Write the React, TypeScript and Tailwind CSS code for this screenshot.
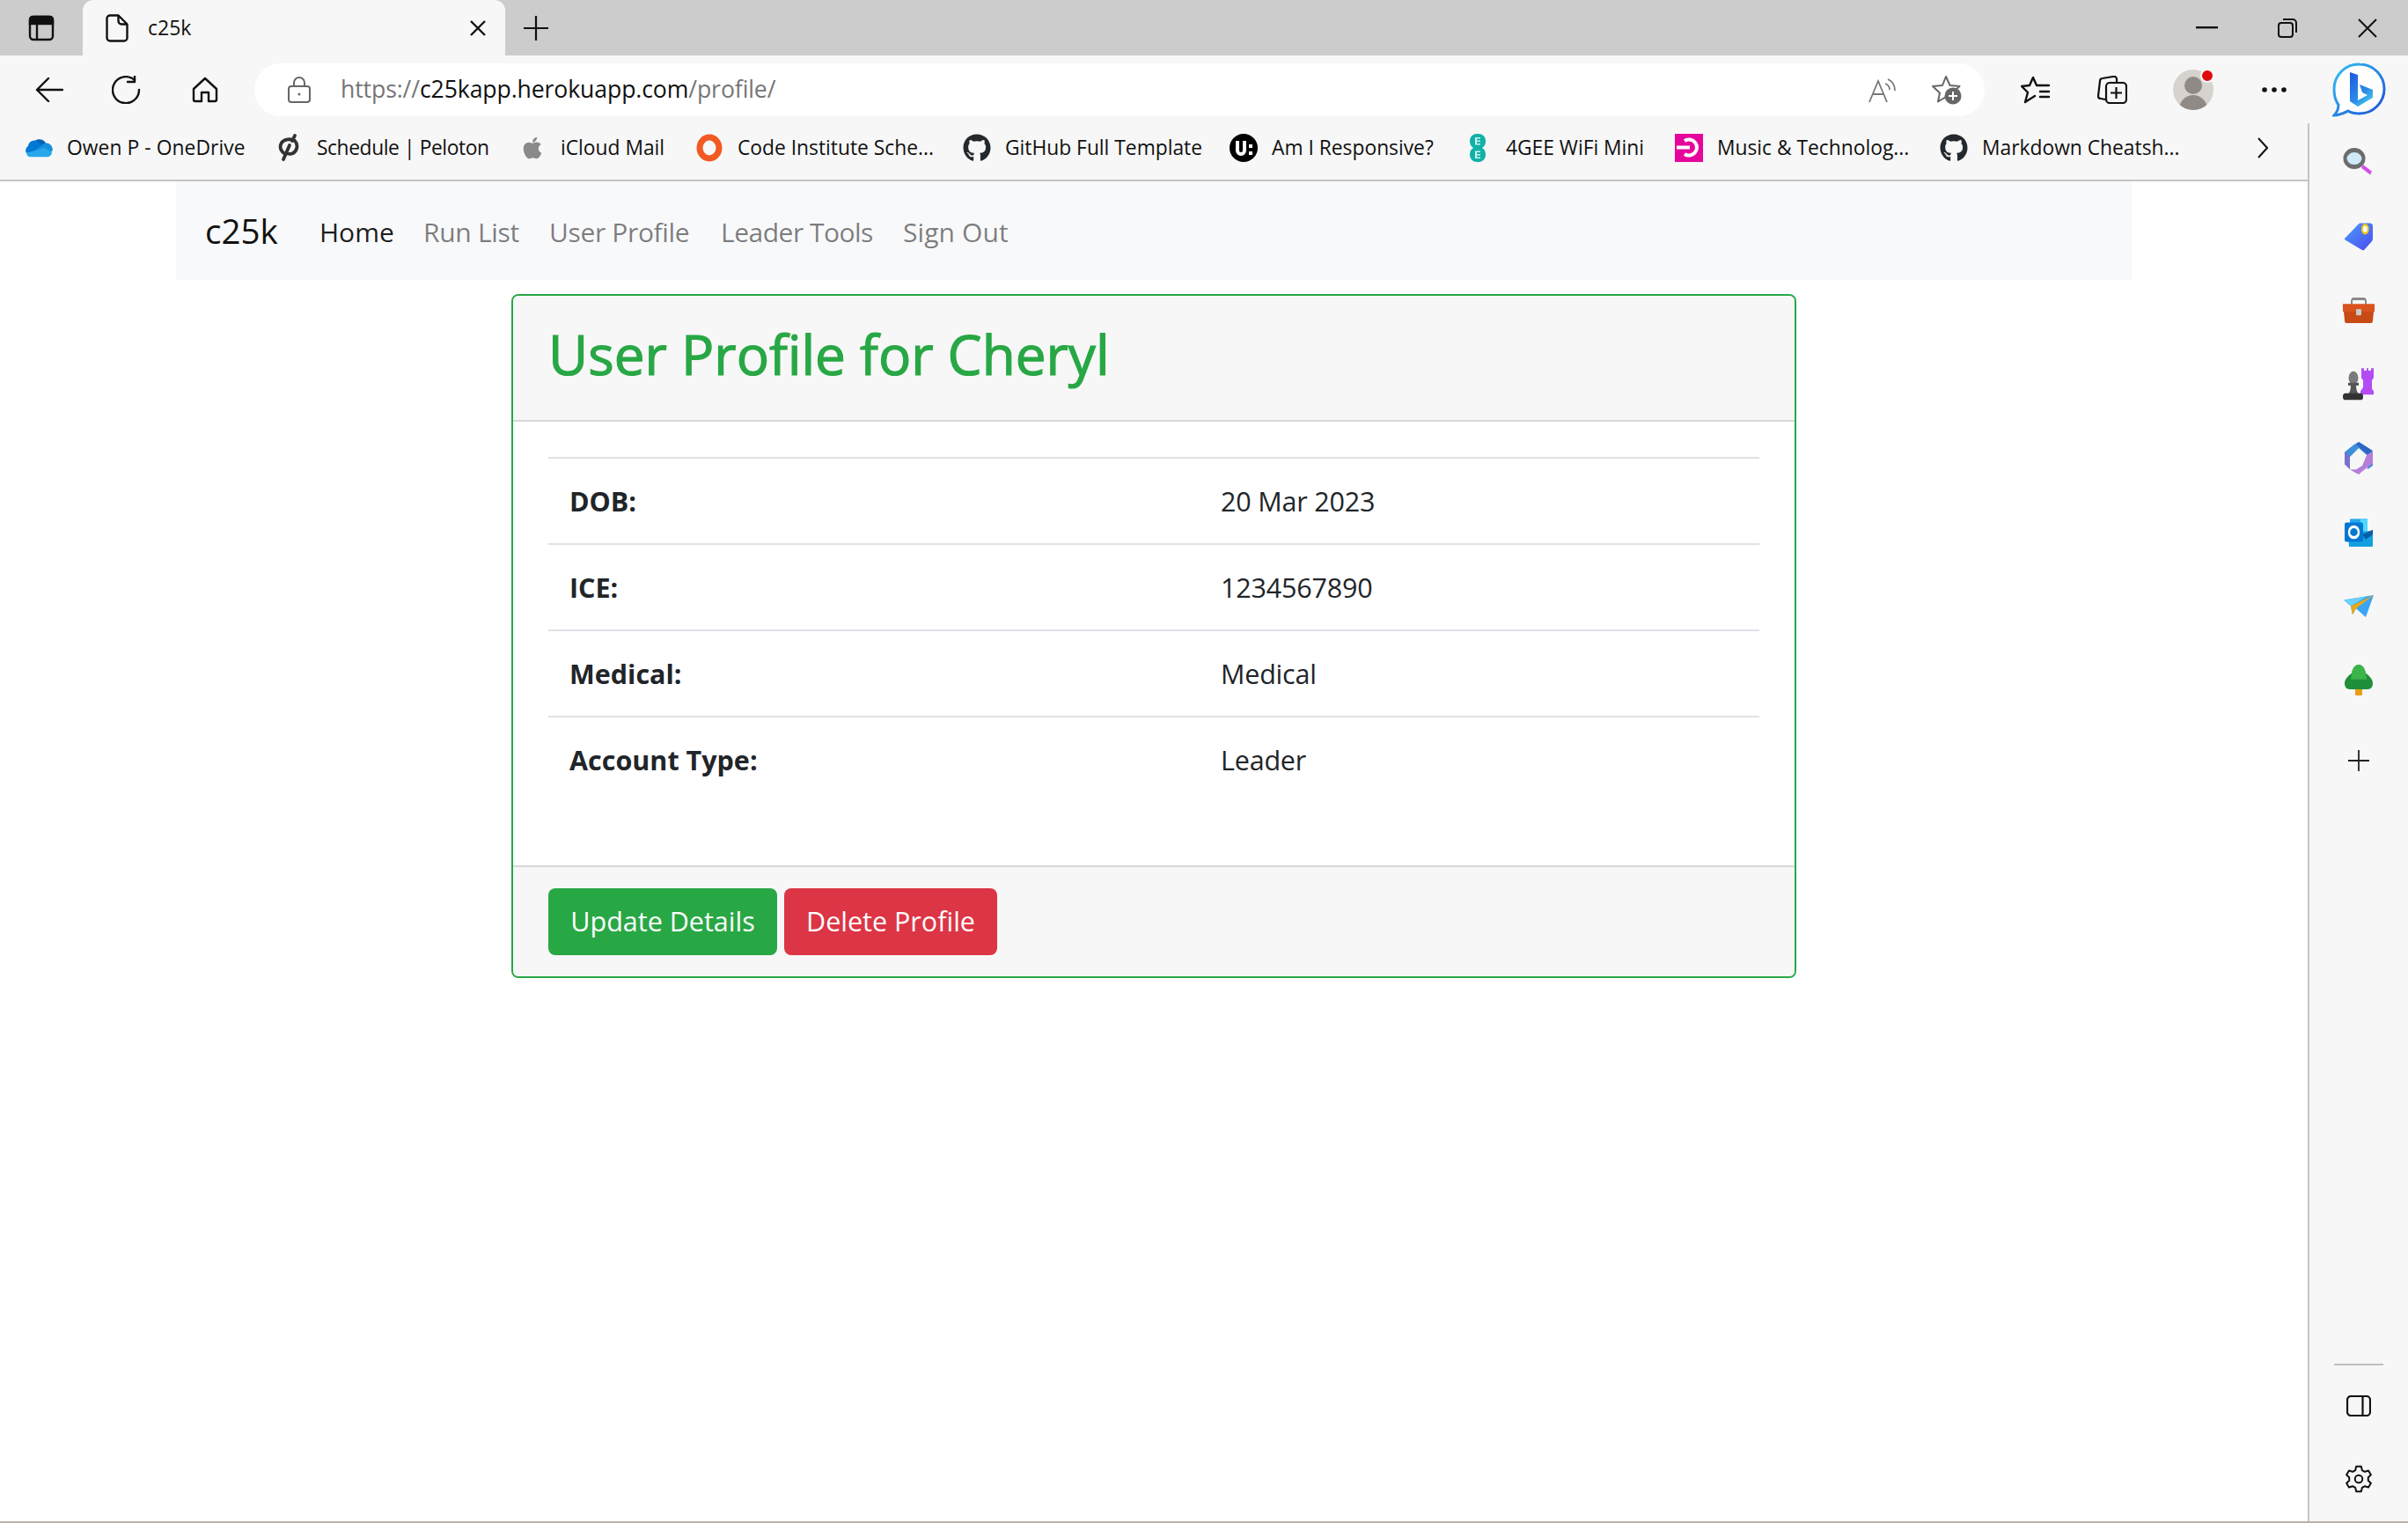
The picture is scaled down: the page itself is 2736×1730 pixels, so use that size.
import React from "react";
import { FaApple, FaGithub } from "react-icons/fa";

const ui = "font-['Open_Sans','Noto_Sans',sans-serif]";

function Doc() {
  return (
    <svg width="26" height="32" viewBox="0 0 26 32" fill="none" stroke="#111" strokeWidth="2.4" strokeLinejoin="round">
      <path d="M5 1.500h9.500L24.500 11.500V27a3.500 3.500 0 0 1-3.500 3.500H5A3.500 3.500 0 0 1 1.500 27V5A3.500 3.500 0 0 1 5 1.500z" />
      <path d="M14.500 1.500V8a3.500 3.500 0 0 0 3.500 3.500h6.500" />
    </svg>
  );
}

function OneDrive() {
  return (
    <svg width="34" height="24" viewBox="0 0 34 24">
      <path d="M13 3a9 9 0 0 1 13 4 7 7 0 0 1 7 9L15 14z" fill="#0364b8" />
      <path d="M4 10a8 8 0 0 1 9-7l9 6-8 8-12 1a6 6 0 0 1 2-8z" fill="#0078d4" />
      <path d="M22 8a7 7 0 0 1 11 8l-8 4-12-6z" fill="#1490df" />
      <path d="M2 18l22-6 9 5a6 6 0 0 1-6 6H7a6 6 0 0 1-5-5z" fill="#28a8ea" />
    </svg>
  );
}

function Peloton() {
  return (
    <svg width="24" height="32" viewBox="0 0 24 32" fill="none" stroke="#333" strokeWidth="3.800" strokeLinecap="round">
      <path d="M19 2l-3 6" />
      <path d="M13 13L6 29" />
      <path d="M9 23C3 21 1 15 4 10c3-4 10-5 15-2 4 4 3 11-2 14-2 1-4 1-6 .5" />
    </svg>
  );
}

function CodeInst() {
  return (
    <svg width="30" height="32" viewBox="0 0 30 32" fill="none">
      <ellipse cx="15" cy="16" rx="11" ry="12" stroke="#f15a22" strokeWidth="7" />
    </svg>
  );
}

function UIcon() {
  return (
    <svg width="32" height="32" viewBox="0 0 32 32">
      <circle cx="16" cy="16" r="16" fill="#000" />
      <path d="M7 8v11a6 6 0 0 0 12 0V8h-4v11a2 2 0 0 1-4 0V8z" fill="#fff" />
      <rect x="22" y="12" width="4" height="4" fill="#fff" />
      <rect x="22" y="20" width="4" height="4" fill="#fff" />
    </svg>
  );
}

function EE() {
  return (
    <svg width="18" height="32" viewBox="0 0 18 32">
      <rect x="0" y="0" width="18" height="17" rx="8" fill="#11b1a8" />
      <rect x="0" y="15" width="18" height="17" rx="8" fill="#11b1a8" />
      <path d="M6 4h6v1.500H8V7.500h4V9H8v2h4v1.500H6zM6 19.500h6V21H8v2h4v1.500H8v2h4V28H6z" fill="#c8f4f0" />
    </svg>
  );
}

function Pink() {
  return (
    <svg width="32" height="32" viewBox="0 0 32 32" fill="none">
      <rect width="32" height="32" fill="#e6069b" />
      <path d="M11 8a9 9 0 1 1 0 15" stroke="#fff" strokeWidth="4" />
      <rect x="2" y="13.500" width="15" height="4" fill="#fff" />
    </svg>
  );
}

function Bookmark({ icon, label, textClass, after }: { icon: React.ReactNode; label: string; textClass: string; after: string }) {
  return (
    <div className={`flex items-center shrink-0 ${after}`}>
      <div className="flex w-[32px] h-[32px] items-center justify-center shrink-0">{icon}</div>
      <span className={`ml-[16px] text-[22.800px] text-[#111] whitespace-nowrap ${textClass}`}>{label}</span>
    </div>
  );
}

function Bing() {
  return (
    <svg width="62" height="62" viewBox="0 0 62 62" fill="none">
      <defs>
        <linearGradient id="bgo" x1="0" y1="0" x2="1" y2="1">
          <stop offset="0" stopColor="#35c1f1" />
          <stop offset="1" stopColor="#1b4fd8" />
        </linearGradient>
        <linearGradient id="bgb" x1="0.2" y1="0" x2="0.8" y2="1">
          <stop offset="0" stopColor="#1e5fe0" />
          <stop offset="0.6" stopColor="#2a8ae8" />
          <stop offset="1" stopColor="#45d0ea" />
        </linearGradient>
      </defs>
      <path
        d="M31 2a28 28 0 0 1 0 56c-6 0-10-1-13-3-4 2-9 5-16 5 3-3 5-8 5-12-3-4-5-10-5-18a28 28 0 0 1 29-28z"
        fill="#fff"
        stroke="url(#bgo)"
        strokeWidth="3"
      />
      <path d="M20 11l9 3v29l11-6-6-3-3-9 15 6v9L29 50l-9-6z" fill="url(#bgb)" />
    </svg>
  );
}

function Gear() {
  return (
    <svg width="34" height="34" viewBox="0 0 24 24" fill="none" stroke="#111" strokeWidth="1.400" strokeLinejoin="round">
      <path d="M10 2h4l.7 3 2.200 1.200 2.900-.9 2 3.400-2.200 2.100v2.400l2.200 2.100-2 3.400-2.900-.9L14.700 19l-.7 3h-4l-.7-3-2.200-1.200-2.900.9-2-3.400 2.200-2.100v-2.400L2.200 8.700l2-3.400 2.900.9L9.300 5z" />
      <circle cx="12" cy="12" r="3" />
    </svg>
  );
}

const sideIcons: React.ReactNode[] = [
  <svg key="s" width="36" height="33" viewBox="0 0 36 26" preserveAspectRatio="none">
    <ellipse cx="13" cy="9.500" rx="10.500" ry="7.500" fill="#cfe9f8" stroke="#6c6c6c" strokeWidth="4" />
    <path d="M23 15l10 6-2 3-10-6z" fill="#d14fe8" />
  </svg>,
  <svg key="t" width="33" height="33" viewBox="0 0 34 24" preserveAspectRatio="none">
    <defs>
      <linearGradient id="tg" x1="0" y1="0" x2="1" y2="1">
        <stop offset="0" stopColor="#4b9cf5" />
        <stop offset="1" stopColor="#4c4cf5" />
      </linearGradient>
    </defs>
    <path d="M1 13L16 2a4 4 0 0 1 2-1h12a3 3 0 0 1 3 3v10a3 3 0 0 1-1 2l-9 7a3 3 0 0 1-3 0L1 15a1 1 0 0 1 0-2z" fill="url(#tg)" />
    <circle cx="24" cy="6" r="3.500" fill="#fff" stroke="#f5c518" strokeWidth="2" />
  </svg>,
  <svg key="b" width="36" height="29" viewBox="0 0 36 20" preserveAspectRatio="none">
    <path d="M10 6V3a2 2 0 0 1 2-2h12a2 2 0 0 1 2 2v3" fill="none" stroke="#8a8a8a" strokeWidth="2" />
    <path d="M0 5h36v6H0z" fill="#d9541e" />
    <path d="M1 11h34l-1 7a2 2 0 0 1-2 2H4a2 2 0 0 1-2-2z" fill="#c84a14" />
    <rect x="15" y="9" width="6" height="5" rx="1" fill="#c9c9c9" />
  </svg>,
  <svg key="c" width="36" height="38" viewBox="0 0 36 28" preserveAspectRatio="none">
    <path d="M21 1h3v2h3V1h2v2h3V1h3v8l-2 2v7l2 2v3H20v-3l3-3v-6l-2-2z" fill="#b44cf5" />
    <circle cx="12" cy="9" r="5.500" fill="#7a7a7a" />
    <path d="M6 13h12v2.500h-3c0 3 1 6 4 8H5c3-2 4-5 4-8H6z" fill="#555" />
    <rect x="0" y="22" width="23" height="5.500" rx="2.700" fill="#333" />
  </svg>,
  <svg key="m" width="32" height="37" viewBox="0 0 32 26" preserveAspectRatio="none">
    <path d="M0 8l11-6 5-2 11 5 5 3v11l-6 3v-11L16 5 6 12v7l-6-3z" fill="#3f8fd8" />
    <path d="M26 9l6-1v9l-13 7-3 2-5-2-5-2 7 0 7-3z" fill="#b57ed8" />
    <path d="M0 8l6 4v10L0 18z" fill="#7a70d0" />
    <path d="M16 0l16 7-6 3L13 2z" fill="#2f67c4" />
  </svg>,
  <svg key="o" width="32" height="33" viewBox="0 0 32 24" preserveAspectRatio="none">
    <path d="M6 1h20v10H6z" fill="#28a8ea" />
    <path d="M18 1h8v10h-8z" fill="#50d9ff" />
    <path d="M4 11h28v12a1 1 0 0 1-1 1H5z" fill="#14a0e0" />
    <path d="M20 14l12-4v4l-8 4z" fill="#0a5ea8" />
    <rect x="0" y="4" width="21" height="16" rx="2" fill="#0078d4" />
    <ellipse cx="10.500" cy="12" rx="5.500" ry="4.500" fill="none" stroke="#fff" strokeWidth="2.400" />
  </svg>,
  <svg key="p" width="34" height="25" viewBox="0 0 34 18" preserveAspectRatio="none">
    <path d="M0 4l34-4-9 18-11-7-4 5-2-7z" fill="#3aa4f5" />
    <path d="M8 9l26-9-20 11-4 5z" fill="#eaa81a" />
    <path d="M0 4l26-3L8 9z" fill="#6dd0fa" />
  </svg>,
  <svg key="tr" width="32" height="35" viewBox="0 0 32 25" preserveAspectRatio="none">
    <rect x="12" y="18" width="8" height="7" rx="1" fill="#e8a010" />
    <path d="M16 0c4 0 7 3 8 7 4 2 8 5 8 8 0 3-2 5-6 5H6c-4 0-6-2-6-5 0-3 4-6 8-8 1-4 4-7 8-7z" fill="#1f8f3a" />
    <path d="M16 0c4 0 7 3 8 7l1 5H7l1-5c1-4 4-7 8-7z" fill="#3cb44a" />
  </svg>,
];

const rows: [string, string][] = [
  ["DOB:", "20 Mar 2023"],
  ["ICE:", "1234567890"],
  ["Medical:", "Medical"],
  ["Account Type:", "Leader"],
];

export default function App() {
  return (
    <div className={`${ui} w-[2736px] h-[1730px] flex flex-col overflow-hidden bg-white text-[#212529]`}>
      {/* tab strip */}
      <div className="h-[63px] shrink-0 bg-[#cccccc] flex items-stretch">
        <div className="w-[94px] flex items-center justify-center">
          <svg width="30" height="30" viewBox="0 0 30 30" fill="none" stroke="#111" strokeWidth="2.400">
            <rect x="2" y="2" width="26" height="26" rx="4" />
            <path d="M2 5a3 3 0 0 1 3-3h20a3 3 0 0 1 3 3v5H2z" fill="#111" />
            <path d="M10 10v18" />
          </svg>
        </div>
        <div className="w-[480px] bg-[#f7f7f7] rounded-t-[12px] flex items-center pl-[26px] pr-[22px]">
          <Doc />
          <span className="ml-[22px] text-[23px] text-[#111]">c25k</span>
          <svg className="ml-auto" width="18" height="18" viewBox="0 0 18 18" stroke="#111" strokeWidth="2.400">
            <path d="M1 1l16 16M17 1L1 17" />
          </svg>
        </div>
        <div className="ml-[21px] flex items-center">
          <svg width="28" height="28" viewBox="0 0 28 28" stroke="#111" strokeWidth="2.200">
            <path d="M0 14h28M14 0v28" />
          </svg>
        </div>
        <div className="ml-auto flex items-center pr-[35px]">
          <svg width="25" height="3" viewBox="0 0 25 3" fill="#111">
            <rect width="25" height="2.400" />
          </svg>
          <svg className="ml-[68px]" width="22" height="22" viewBox="0 0 22 22" fill="none" stroke="#111" strokeWidth="2">
            <rect x="1" y="5" width="16" height="16" rx="3" />
            <path d="M6 1h11a4 4 0 0 1 4 4v11" />
          </svg>
          <svg className="ml-[69px]" width="22" height="22" viewBox="0 0 22 22" stroke="#111" strokeWidth="2">
            <path d="M1 1l20 20M21 1L1 21" />
          </svg>
        </div>
      </div>

      {/* toolbar */}
      <div className="h-[77px] shrink-0 bg-[#f7f7f7] pt-[9px]">
        <div className="h-[60px] flex items-center">
          <div className="flex items-center pl-[40px] w-[289px]">
            <svg width="32" height="30" viewBox="0 0 32 30" fill="none" stroke="#111" strokeWidth="2.400" strokeLinecap="round" strokeLinejoin="round">
              <path d="M31 15H2M15 2L2 15l13 13" />
            </svg>
            <svg className="ml-[55px]" width="34" height="32" viewBox="0 0 34 32" fill="none" stroke="#111" strokeWidth="2.400" strokeLinecap="round" strokeLinejoin="round">
              <path d="M26 5a15 15 0 1 0 5 11" />
              <path d="M26 0v7h-8" />
            </svg>
            <svg className="ml-[57px]" width="30" height="30" viewBox="0 0 30 30" fill="none" stroke="#111" strokeWidth="2.400" strokeLinejoin="round">
              <path d="M15 2L2 14v12a2 2 0 0 0 2 2h7V18h8v10h7a2 2 0 0 0 2-2V14z" />
            </svg>
          </div>
          <div className="w-[1966px] h-[60px] bg-white rounded-[30px] flex items-center pl-[38px] pr-[24px]">
            <svg width="26" height="30" viewBox="0 0 26 30" fill="none" stroke="#666" strokeWidth="2">
              <rect x="1" y="11" width="24" height="18" rx="3" />
              <path d="M7 11V7a6 6 0 0 1 12 0v4" />
              <circle cx="13" cy="20" r="1.500" fill="#666" stroke="none" />
            </svg>
            <span className="ml-[34px] text-[26.600px] tracking-[-0.1px] text-[#767676] whitespace-nowrap">
              https://<span className="text-[#111]">c25kapp.herokuapp.com</span>/profile/
            </span>
            <svg className="ml-auto" width="32" height="30" viewBox="0 0 32 30" fill="none" stroke="#777" strokeWidth="1.800">
              <path d="M1 29L11 5l10 24M5 20h12" />
              <path d="M19 8c3 1 5 3 5 7M22 3c5 2 8 6 8 13" />
            </svg>
            <svg className="ml-[38px]" width="38" height="34" viewBox="0 0 38 34" fill="none">
              <path d="M18 2l4.500 10 11 1-8 7.500 2 10-9.500-5.500L9 30.500l2-10-8-7.500 11-1z" stroke="#666" strokeWidth="2" strokeLinejoin="round" />
              <circle cx="26" cy="24" r="9.500" fill="#666" />
              <path d="M26 19v10M21 24h10" stroke="#fff" strokeWidth="2" />
            </svg>
          </div>
          <svg className="ml-[41px]" width="34" height="32" viewBox="0 0 34 32" fill="none" stroke="#111" strokeWidth="2.400" strokeLinejoin="round" strokeLinecap="round">
            <path d="M22 11h-4L14 2l-4 9-9 1 7 7-3 11 11-7" />
            <path d="M22 11h10M22 18h10M22 24h10" />
          </svg>
          <svg className="ml-[53px]" width="34" height="32" viewBox="0 0 34 32" fill="none" stroke="#111" strokeWidth="2.200" strokeLinejoin="round">
            <path d="M9 27l-5-1a3 3 0 0 1-3-3L3 6a3 3 0 0 1 3-3l12-2a3 3 0 0 1 4 3v3" />
            <rect x="10" y="8" width="23" height="23" rx="4" />
            <path d="M21.500 13v13M15 19.500h13" />
          </svg>
          <div className="relative ml-[52px] w-[46px] h-[46px] shrink-0">
            <div className="absolute inset-0 rounded-full bg-[#d6d3cf] overflow-hidden">
              <div className="absolute left-[13px] top-[8px] w-[20px] h-[20px] rounded-full bg-[#8f8a85]" />
              <div className="absolute left-[7px] top-[29px] w-[32px] h-[32px] rounded-full bg-[#8f8a85]" />
            </div>
            <div className="absolute left-[31px] top-[-1px] w-[16px] h-[16px] rounded-full bg-[#e00b0b] border-2 border-[#f7f7f7]" />
          </div>
          <svg className="ml-[55px]" width="28" height="6" viewBox="0 0 28 6" fill="#111">
            <circle cx="3" cy="3" r="2.800" />
            <circle cx="14" cy="3" r="2.800" />
            <circle cx="25" cy="3" r="2.800" />
          </svg>
          <div className="ml-[52px]">
            <Bing />
          </div>
        </div>
      </div>

      {/* below toolbar */}
      <div className="flex-1 flex min-h-0 border-b-2 border-[#b9b2a9]">
        <div className="w-[2622px] shrink-0 flex flex-col">
          <div className="h-[66px] shrink-0 bg-[#f7f7f7] border-b-2 border-[#c4c4c4] flex items-center pl-[28px] pb-[8px]">
            <Bookmark icon={<OneDrive />} label="Owen P - OneDrive" textClass="w-[202px] tracking-[0.08px]" after="mr-[34px]" />
            <Bookmark icon={<Peloton />} label="Schedule | Peloton" textClass="w-[195px] tracking-[-0.4px]" after="mr-[34px]" />
            <Bookmark icon={<FaApple size={28} color="#8a8a8a" />} label="iCloud Mail" textClass="w-[118px]" after="mr-[35px]" />
            <Bookmark icon={<CodeInst />} label="Code Institute Sche..." textClass="w-[223px]" after="mr-[33px]" />
            <Bookmark icon={<FaGithub size={32} color="#24292e" />} label="GitHub Full Template" textClass="w-[221px]" after="mr-[34px]" />
            <Bookmark icon={<UIcon />} label="Am I Responsive?" textClass="w-[183px]" after="mr-[35px]" />
            <Bookmark icon={<EE />} label="4GEE WiFi Mini" textClass="w-[160px]" after="mr-[32px]" />
            <Bookmark icon={<Pink />} label="Music & Technolog..." textClass="w-[220px]" after="mr-[33px]" />
            <Bookmark icon={<FaGithub size={32} color="#24292e" />} label="Markdown Cheatsh..." textClass="w-[221px]" after="mr-[92px]" />
            <svg width="12" height="24" viewBox="0 0 12 24" fill="none" stroke="#111" strokeWidth="2">
              <path d="M1 1l10 11L1 23" />
            </svg>
          </div>

          {/* page */}
          <div className="flex-1 min-h-0 bg-white">
            <nav className="w-[2222px] h-[112px] mx-auto bg-[#f8f9fa] flex items-center pl-[33px] pt-[2px] text-[30px] tracking-[-0.15px]">
              <span className="text-[38.500px] tracking-normal text-[#111] w-[114px]">c25k</span>
              <a className="pl-[16px] w-[118px] tracking-[0px] text-black/90">Home</a>
              <a className="pl-[16px] w-[143px] tracking-[-0.3px] text-black/50">Run List</a>
              <a className="pl-[16px] w-[195px] tracking-[-0.35px] text-black/50">User Profile</a>
              <a className="pl-[16px] w-[207px] tracking-[-0.5px] text-black/50">Leader Tools</a>
              <a className="pl-[16px] w-[160px] tracking-[0.1px] text-black/50">Sign Out</a>
            </nav>

            <div className="w-[1460px] mx-auto mt-[16px] border-2 border-[#28a745] rounded-[8px] overflow-hidden">
              <div className="h-[143px] bg-[#f7f7f7] border-b-2 border-[#d8d8d8] flex items-center px-[40px] pb-[10px]">
                <h2 className="text-[62px] font-normal [-webkit-text-stroke:1.2px_#28a745] text-[#28a745] leading-none">User Profile for Cheryl</h2>
              </div>
              <div className="h-[504px] px-[40px] pt-[40px] bg-white">
                {rows.map(([k, v]) => (
                  <div key={k} className="h-[98px] border-t-2 border-[#dee2e6] flex items-center pl-[24px] pt-[2px]">
                    <span className="w-[740px] text-[30.500px] font-bold text-[#212529]">{k}</span>
                    <span className="text-[30.500px] tracking-[-0.2px] text-[#212529]">{v}</span>
                  </div>
                ))}
              </div>
              <div className="h-[126px] bg-[#f7f7f7] border-t-2 border-[#d8d8d8] flex items-center gap-[8px] px-[40px]">
                <button className="w-[260px] h-[76px] rounded-[8px] bg-[#28a745] text-white text-[30.500px]">Update Details</button>
                <button className="w-[242px] h-[76px] rounded-[8px] bg-[#dc3545] text-white text-[30.500px]">Delete Profile</button>
              </div>
            </div>
          </div>
        </div>

        {/* sidebar */}
        <div className="w-[114px] shrink-0 bg-[#f7f7f7] border-l-2 border-[#c4c4c4] flex flex-col items-center pt-[2px]">
          {sideIcons.map((ic, i) => (
            <div key={i} className="h-[84px] shrink-0 flex items-center justify-center">
              {ic}
            </div>
          ))}
          <div className="h-[84px] mt-[8px] shrink-0 flex items-center justify-center">
            <svg width="24" height="24" viewBox="0 0 24 24" stroke="#222" strokeWidth="1.800">
              <path d="M0 12h24M12 0v24" />
            </svg>
          </div>
          <div className="mt-auto w-[56px] h-[2px] bg-[#bdbdbd]" />
          <svg className="mt-[34px]" width="28" height="24" viewBox="0 0 28 24" fill="none" stroke="#111" strokeWidth="2.200">
            <rect x="1" y="1" width="26" height="22" rx="4" />
            <path d="M18.500 1v22" />
          </svg>
          <div className="mt-[54px] mb-[31px]">
            <Gear />
          </div>
        </div>
      </div>
    </div>
  );
}
